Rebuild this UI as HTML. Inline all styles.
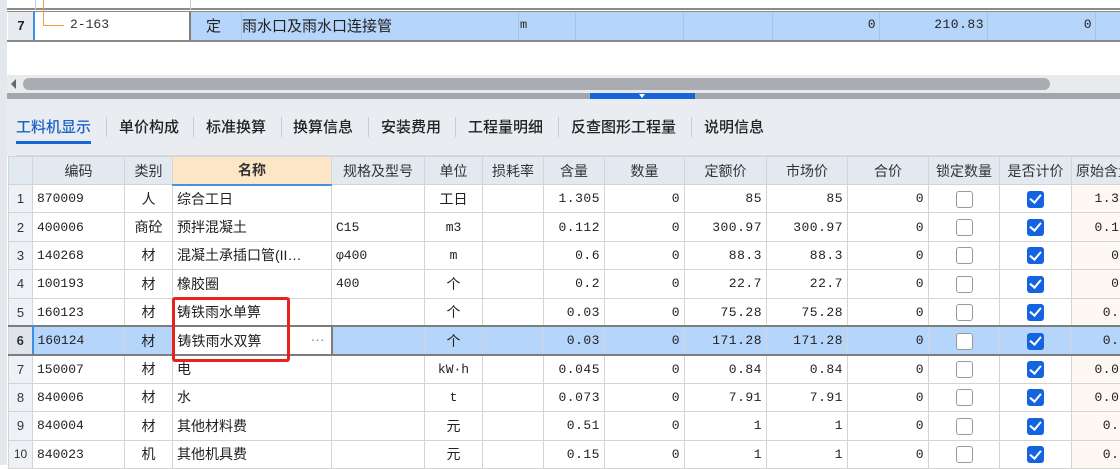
<!DOCTYPE html>
<html><head><meta charset="utf-8"><style>
*{margin:0;padding:0;box-sizing:border-box}
body{width:1120px;height:465px;overflow:hidden;background:#fff;position:relative;font-family:"Liberation Sans","Noto Sans CJK SC",sans-serif;font-size:14px;color:#222}
.abs{position:absolute}
table{border-collapse:collapse;table-layout:fixed;position:absolute}
td{border:1px solid #d4d4d4;height:28.4px;white-space:nowrap;overflow:hidden;padding:0 4px}
.n{text-align:right;font-family:"Liberation Mono","Noto Sans CJK SC",monospace;font-size:13px;letter-spacing:0.5px}
.c{text-align:center}
.mono{font-family:"Liberation Mono","Noto Sans CJK SC",monospace;font-size:13px}
.rn{background:#eef1f5;text-align:center;font-size:13px;color:#333}
.hd td{background:#e3e9f1;text-align:center;color:#333;height:28px}
.sel td{background:#b5d5fb;border-top:2px solid #7d7d7d;border-bottom:2px solid #7d7d7d}
.cb{display:inline-block;width:17px;height:17px;border:1.5px solid #999;border-radius:3px;background:#fff;vertical-align:middle}
.ck{display:inline-block;width:17px;height:17px;border-radius:3px;background:#1463e0;vertical-align:middle;position:relative}
.ck:after{content:"";position:absolute;left:5px;top:1.5px;width:5px;height:9px;border:solid #fff;border-width:0 2.5px 2.5px 0;transform:rotate(40deg)}
.org td.o{background:#fdf8f1}
.tab{position:absolute;top:116px;font-size:15px;color:#222;font-weight:500}
.sep{position:absolute;top:117px;width:1px;height:20px;background:#c8ccd2}
</style></head><body>
<div class="abs" style="left:0;top:0;width:7px;height:465px;background:#e4e7eb"></div>
<div class="abs" style="left:7px;top:0;width:1113px;height:10px;border-bottom:2px solid #8a8a8a"></div>
<div class="abs" style="left:35px;top:0;width:1px;height:10px;background:#ccc"></div>
<div class="abs" style="left:190px;top:0;width:1px;height:10px;background:#ccc"></div>
<div class="abs" style="left:8px;top:12px;width:26px;height:28px;background:#e7eaee;font-weight:bold;font-size:13px;text-align:center;line-height:28px">7</div>
<div class="abs" style="left:33px;top:12px;width:158px;height:28px;background:#fff;border-left:2px solid #3c8ee8;border-right:2px solid #7d7d7d"></div>
<div class="abs" style="left:43px;top:0;width:1px;height:25px;background:#f39a3c;z-index:5"></div>
<div class="abs" style="left:43px;top:25px;width:21px;height:1px;background:#f39a3c;z-index:5"></div>
<div class="abs mono" style="left:70px;top:17px;color:#333">2-163</div>
<div class="abs" style="left:191px;top:12px;width:929px;height:28px;background:#b5d5fb"></div>
<div class="abs" style="left:7px;top:40px;width:1113px;height:2px;background:#8a8a8a"></div>
<div class="abs" style="left:7px;top:11px;width:1113px;height:1px;background:#8a8a8a"></div>
<div class="abs" style="left:206px;top:15px;font-size:15px">定</div>
<div class="abs" style="left:242px;top:15px;font-size:15px">雨水口及雨水口连接管</div>
<div class="abs" style="left:520px;top:18px;font-size:12px;font-family:'Liberation Mono',monospace">m</div>
<div class="abs" style="left:241px;top:12px;width:1px;height:28px;background:#aac4e0"></div>
<div class="abs" style="left:518px;top:12px;width:1px;height:28px;background:#aac4e0"></div>
<div class="abs" style="left:575px;top:12px;width:1px;height:28px;background:#aac4e0"></div>
<div class="abs" style="left:683px;top:12px;width:1px;height:28px;background:#aac4e0"></div>
<div class="abs" style="left:772px;top:12px;width:1px;height:28px;background:#aac4e0"></div>
<div class="abs" style="left:879px;top:12px;width:1px;height:28px;background:#aac4e0"></div>
<div class="abs" style="left:987px;top:12px;width:1px;height:28px;background:#aac4e0"></div>
<div class="abs" style="left:1095px;top:12px;width:1px;height:28px;background:#aac4e0"></div>
<div class="abs n" style="left:820px;top:17px;width:56px">0</div>
<div class="abs n" style="left:900px;top:17px;width:84px">210.83</div>
<div class="abs n" style="left:1030px;top:17px;width:62px">0</div>
<div class="abs" style="left:7px;top:75px;width:1113px;height:18px;background:#e8eaed"></div>
<div class="abs" style="left:11px;top:79px;width:0;height:0;border-top:5px solid transparent;border-bottom:5px solid transparent;border-right:5px solid #666"></div>
<div class="abs" style="left:23px;top:78px;width:1027px;height:12px;background:#a9adb2;border-radius:6px"></div>
<div class="abs" style="left:7px;top:93px;width:1113px;height:6px;background:#a3a6aa"></div>
<div class="abs" style="left:590px;top:93px;width:105px;height:6px;background:#1565d8"></div>
<div class="abs" style="left:639px;top:94px;width:0;height:0;border-left:3px solid transparent;border-right:3px solid transparent;border-top:4px solid #fff"></div>
<div class="abs" style="left:7px;top:99px;width:1113px;height:58px;background:#e9ecf0"></div>
<div class="tab" style="left:16px;color:#1a63c8">工料机显示</div>
<div class="abs" style="left:16px;top:141px;width:75px;height:3px;background:#1565d8"></div>
<div class="sep" style="left:106px"></div>
<div class="tab" style="left:119px">单价构成</div>
<div class="sep" style="left:193px"></div>
<div class="tab" style="left:206px">标准换算</div>
<div class="sep" style="left:281px"></div>
<div class="tab" style="left:293px">换算信息</div>
<div class="sep" style="left:368px"></div>
<div class="tab" style="left:381px">安装费用</div>
<div class="sep" style="left:455px"></div>
<div class="tab" style="left:468px">工程量明细</div>
<div class="sep" style="left:558px"></div>
<div class="tab" style="left:571px">反查图形工程量</div>
<div class="sep" style="left:691px"></div>
<div class="tab" style="left:704px">说明信息</div>
<div class="abs" style="left:16px;top:155px;width:1104px;height:2px;background:#d6d9dd"></div>
<table style="left:8px;top:156px;width:1132px">
<colgroup><col style="width:24px"><col style="width:92px"><col style="width:48px"><col style="width:159px"><col style="width:93px"><col style="width:58px"><col style="width:61px"><col style="width:61px"><col style="width:80px"><col style="width:82px"><col style="width:81px"><col style="width:81px"><col style="width:71px"><col style="width:72px"><col style="width:69px"></colgroup>
<tr class="hd"><td></td><td>编码</td><td>类别</td><td style="background:#fde6c6;font-weight:bold;border-bottom:2px solid #4a90e2">名称</td><td>规格及型号</td><td>单位</td><td>损耗率</td><td>含量</td><td>数量</td><td>定额价</td><td>市场价</td><td>合价</td><td>锁定数量</td><td>是否计价</td><td style="text-align:left">原始含量</td></tr>
<tr class="org"><td class="rn">1</td><td class="mono">870009</td><td class="c">人</td><td>综合工日</td><td></td><td class="c">工日</td><td></td><td class="n">1.305</td><td class="n">0</td><td class="n">85</td><td class="n">85</td><td class="n">0</td><td class="c"><span class="cb"></span></td><td class="c"><span class="ck"></span></td><td class="n o" style="text-align:right">1.305</td></tr>
<tr class="org"><td class="rn">2</td><td class="mono">400006</td><td class="c">商砼</td><td>预拌混凝土</td><td class="mono">C15</td><td class="c mono">m3</td><td></td><td class="n">0.112</td><td class="n">0</td><td class="n">300.97</td><td class="n">300.97</td><td class="n">0</td><td class="c"><span class="cb"></span></td><td class="c"><span class="ck"></span></td><td class="n o">0.112</td></tr>
<tr class="org"><td class="rn">3</td><td class="mono">140268</td><td class="c">材</td><td>混凝土承插口管(II…</td><td class="mono">φ400</td><td class="c mono">m</td><td></td><td class="n">0.6</td><td class="n">0</td><td class="n">88.3</td><td class="n">88.3</td><td class="n">0</td><td class="c"><span class="cb"></span></td><td class="c"><span class="ck"></span></td><td class="n o">0.6</td></tr>
<tr class="org"><td class="rn">4</td><td class="mono">100193</td><td class="c">材</td><td>橡胶圈</td><td class="mono">400</td><td class="c">个</td><td></td><td class="n">0.2</td><td class="n">0</td><td class="n">22.7</td><td class="n">22.7</td><td class="n">0</td><td class="c"><span class="cb"></span></td><td class="c"><span class="ck"></span></td><td class="n o">0.2</td></tr>
<tr class="org"><td class="rn">5</td><td class="mono">160123</td><td class="c">材</td><td>铸铁雨水单箅</td><td></td><td class="c">个</td><td></td><td class="n">0.03</td><td class="n">0</td><td class="n">75.28</td><td class="n">75.28</td><td class="n">0</td><td class="c"><span class="cb"></span></td><td class="c"><span class="ck"></span></td><td class="n o">0.03</td></tr>
<tr class="sel"><td class="rn" style="background:#dfe4ea;font-weight:bold;border-right:2px solid #3c8ee8">6</td><td class="mono">160124</td><td class="c">材</td><td style="background:#fff;border-left:2px solid #7d7d7d;border-right:2px solid #7d7d7d;position:relative">铸铁雨水双箅<span style="position:absolute;right:6px;top:4px;color:#4a90e2">···</span></td><td></td><td class="c">个</td><td></td><td class="n">0.03</td><td class="n">0</td><td class="n">171.28</td><td class="n">171.28</td><td class="n">0</td><td class="c"><span class="cb"></span></td><td class="c"><span class="ck"></span></td><td class="n">0.03</td></tr>
<tr class="org"><td class="rn">7</td><td class="mono">150007</td><td class="c">材</td><td>电</td><td></td><td class="c mono">kW·h</td><td></td><td class="n">0.045</td><td class="n">0</td><td class="n">0.84</td><td class="n">0.84</td><td class="n">0</td><td class="c"><span class="cb"></span></td><td class="c"><span class="ck"></span></td><td class="n o">0.045</td></tr>
<tr class="org"><td class="rn">8</td><td class="mono">840006</td><td class="c">材</td><td>水</td><td></td><td class="c mono">t</td><td></td><td class="n">0.073</td><td class="n">0</td><td class="n">7.91</td><td class="n">7.91</td><td class="n">0</td><td class="c"><span class="cb"></span></td><td class="c"><span class="ck"></span></td><td class="n o">0.073</td></tr>
<tr class="org"><td class="rn">9</td><td class="mono">840004</td><td class="c">材</td><td>其他材料费</td><td></td><td class="c">元</td><td></td><td class="n">0.51</td><td class="n">0</td><td class="n">1</td><td class="n">1</td><td class="n">0</td><td class="c"><span class="cb"></span></td><td class="c"><span class="ck"></span></td><td class="n o">0.51</td></tr>
<tr class="org"><td class="rn" style="font-size:12px;padding:0">10</td><td class="mono">840023</td><td class="c">机</td><td>其他机具费</td><td></td><td class="c">元</td><td></td><td class="n">0.15</td><td class="n">0</td><td class="n">1</td><td class="n">1</td><td class="n">0</td><td class="c"><span class="cb"></span></td><td class="c"><span class="ck"></span></td><td class="n o">0.15</td></tr>
</table>
<div class="abs" style="left:172px;top:297px;width:118px;height:65px;border:3px solid #e8221c;border-radius:3px"></div>
</body></html>
